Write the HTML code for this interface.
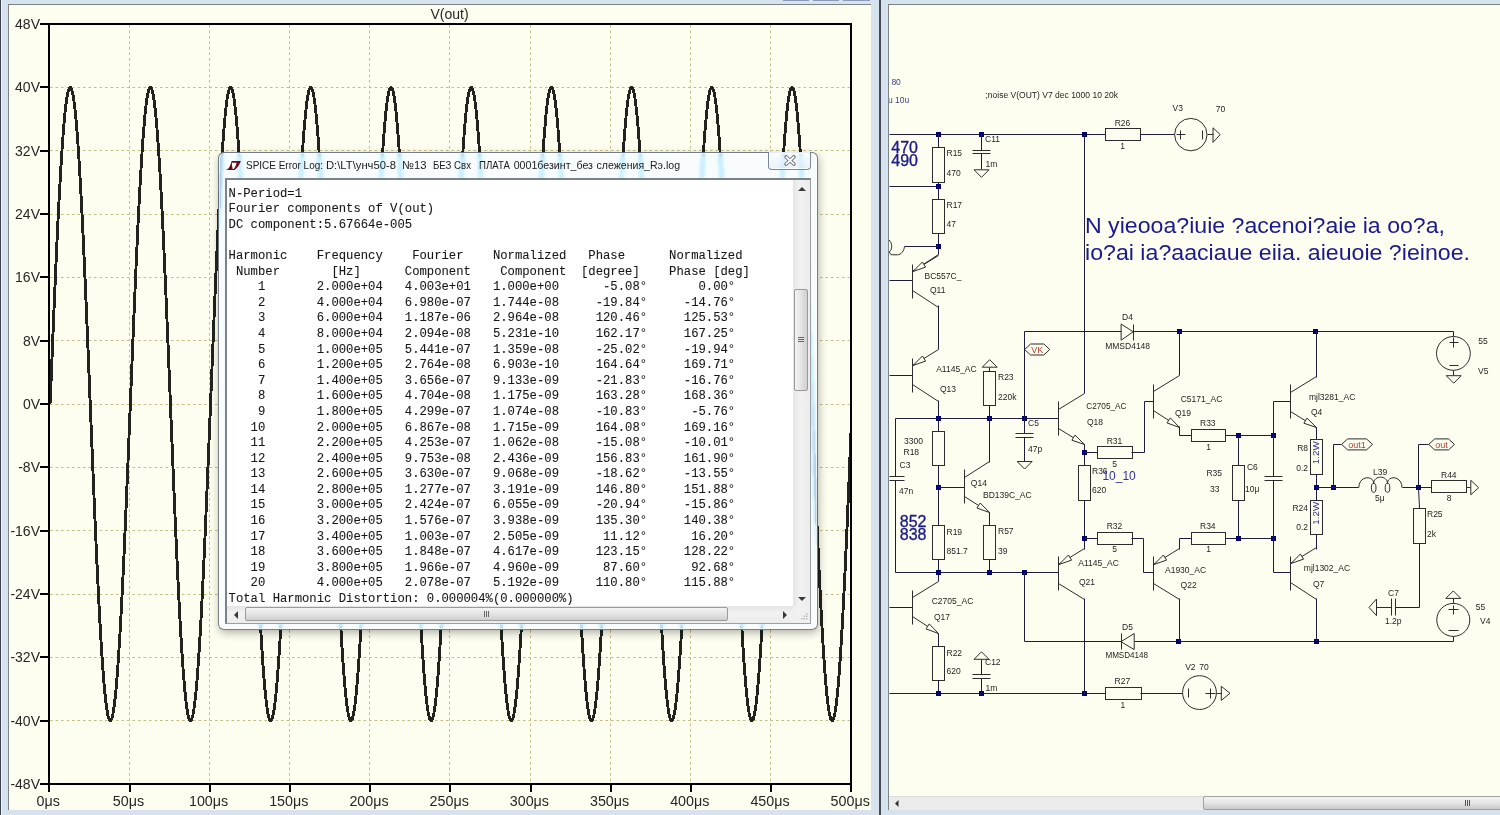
<!DOCTYPE html>
<html><head><meta charset="utf-8"><style>
html,body{margin:0;padding:0;width:1500px;height:815px;overflow:hidden;background:#d6e2ee;}
body{position:relative;font-family:"Liberation Sans",sans-serif;}
.abs{position:absolute;}
#lpane{left:8px;top:4px;width:863px;height:806px;background:#fefef0;border-left:1px solid #7c8484;border-top:1px solid #7c8484;box-sizing:border-box;}
#rpane{left:888px;top:4px;width:620px;height:806px;background:#fefef0;border-left:1px solid #7c8484;border-top:1px solid #7c8484;box-sizing:border-box;}
#dlg{left:218px;top:152px;width:600px;height:478px;border-radius:6px;border:1px solid rgba(84,94,106,0.8);box-sizing:border-box;background:rgba(248,251,254,0.5);backdrop-filter:blur(3px) sepia(1) hue-rotate(175deg) saturate(1.8);box-shadow:inset 0 0 0 1px rgba(255,255,255,0.6);}
#client{left:225px;top:178px;width:586px;height:446px;background:#fff;border:2px solid #7c8288;border-right:1px solid #9aa0a6;border-bottom:1px solid #9aa0a6;box-sizing:border-box;}
pre{margin:0;font-family:"Liberation Mono",monospace;font-size:12.24px;line-height:15.6px;color:#161616;-webkit-text-stroke:0.08px #161616;}
</style></head><body>
<div class="abs" style="left:0;top:0;width:1px;height:815px;background:#3c4450"></div>
<div class="abs" style="left:1px;top:0;width:1px;height:815px;background:#eaf2fa"></div>
<div class="abs" style="left:879px;top:0;width:2px;height:815px;background:#444c58"></div>
<div id="lpane" class="abs"></div>
<svg class="plot" width="862" height="805" viewBox="9 5 862 805" style="position:absolute;left:9px;top:5px">
<g stroke="#c6bc84" stroke-width="1" stroke-dasharray="2.6,2.9" fill="none"><line x1="129.5" y1="25" x2="129.5" y2="783" /><line x1="209.5" y1="25" x2="209.5" y2="783" /><line x1="289.5" y1="25" x2="289.5" y2="783" /><line x1="369.5" y1="25" x2="369.5" y2="783" /><line x1="449.5" y1="25" x2="449.5" y2="783" /><line x1="530.5" y1="25" x2="530.5" y2="783" /><line x1="610.5" y1="25" x2="610.5" y2="783" /><line x1="690.5" y1="25" x2="690.5" y2="783" /><line x1="770.5" y1="25" x2="770.5" y2="783" /><line x1="50" y1="87.5" x2="850" y2="87.5" /><line x1="50" y1="150.5" x2="850" y2="150.5" /><line x1="50" y1="214.5" x2="850" y2="214.5" /><line x1="50" y1="277.5" x2="850" y2="277.5" /><line x1="50" y1="340.5" x2="850" y2="340.5" /><line x1="50" y1="404.5" x2="850" y2="404.5" /><line x1="50" y1="467.5" x2="850" y2="467.5" /><line x1="50" y1="530.5" x2="850" y2="530.5" /><line x1="50" y1="594.5" x2="850" y2="594.5" /><line x1="50" y1="657.5" x2="850" y2="657.5" /><line x1="50" y1="720.5" x2="850" y2="720.5" /></g>
<polyline points="49.00,404.00 50.20,402.23 50.60,392.29 51.01,382.35 51.41,372.44 51.81,362.56 52.21,352.72 52.61,342.93 53.01,333.20 53.41,323.54 53.81,313.96 54.21,304.46 54.61,295.07 55.02,285.78 55.42,276.62 55.82,267.57 56.22,258.66 56.62,249.90 57.02,241.28 57.42,232.83 57.82,224.55 58.22,216.44 58.62,208.52 59.02,200.79 59.43,193.26 59.83,185.94 60.23,178.84 60.63,171.95 61.03,165.30 61.43,158.88 61.83,152.70 62.23,146.78 62.63,141.10 63.03,135.69 63.44,130.54 63.84,125.66 64.24,121.05 64.64,116.72 65.04,112.68 65.44,108.92 65.84,105.46 66.24,102.29 66.64,99.42 67.05,96.85 67.45,94.58 67.85,92.62 68.25,90.96 68.65,89.61 69.05,88.58 69.45,87.85 69.85,87.44 70.25,87.34 70.65,87.55 71.06,88.07 71.46,88.91 71.86,90.06 72.26,91.51 72.66,93.28 73.06,95.35 73.46,97.73 73.86,100.41 74.26,103.38 74.66,106.66 75.06,110.23 75.47,114.08 75.87,118.23 76.27,122.66 76.67,127.36 77.07,132.34 77.47,137.58 77.87,143.09 78.27,148.85 78.67,154.87 79.08,161.14 79.48,167.64 79.88,174.37 80.28,181.34 80.68,188.52 81.08,195.91 81.48,203.51 81.88,211.31 82.28,219.30 82.68,227.47 83.09,235.82 83.49,244.33 83.89,253.00 84.29,261.81 84.69,270.77 85.09,279.86 85.49,289.07 85.89,298.40 86.29,307.83 86.69,317.35 87.09,326.96 87.50,336.65 87.90,346.40 88.30,356.21 88.70,366.07 89.10,375.96 89.50,385.88 89.90,395.82 90.30,405.77 90.70,415.71 91.10,425.65 91.51,435.56 91.91,445.44 92.31,455.28 92.71,465.07 93.11,474.80 93.51,484.46 93.91,494.04 94.31,503.54 94.71,512.93 95.12,522.22 95.52,531.38 95.92,540.43 96.32,549.34 96.72,558.10 97.12,566.72 97.52,575.17 97.92,583.45 98.32,591.56 98.72,599.48 99.12,607.21 99.53,614.74 99.93,622.06 100.33,629.16 100.73,636.05 101.13,642.70 101.53,649.12 101.93,655.30 102.33,661.22 102.73,666.90 103.13,672.31 103.54,677.46 103.94,682.34 104.34,686.95 104.74,691.28 105.14,695.32 105.54,699.08 105.94,702.54 106.34,705.71 106.74,708.58 107.15,711.15 107.55,713.42 107.95,715.38 108.35,717.04 108.75,718.39 109.15,719.42 109.55,720.15 109.95,720.56 110.35,720.66 110.75,720.45 111.16,719.93 111.56,719.09 111.96,717.94 112.36,716.49 112.76,714.72 113.16,712.65 113.56,710.27 113.96,707.59 114.36,704.62 114.76,701.34 115.17,697.77 115.57,693.92 115.97,689.77 116.37,685.34 116.77,680.64 117.17,675.66 117.57,670.42 117.97,664.91 118.37,659.15 118.77,653.13 119.17,646.86 119.58,640.36 119.98,633.63 120.38,626.66 120.78,619.48 121.18,612.09 121.58,604.49 121.98,596.69 122.38,588.70 122.78,580.53 123.19,572.18 123.59,563.67 123.99,555.00 124.39,546.19 124.79,537.23 125.19,528.14 125.59,518.93 125.99,509.60 126.39,500.17 126.79,490.65 127.19,481.04 127.60,471.35 128.00,461.60 128.40,451.79 128.80,441.93 129.20,432.04 129.60,422.12 130.00,412.18 130.40,402.23 130.80,392.29 131.20,382.35 131.61,372.44 132.01,362.56 132.41,352.72 132.81,342.93 133.21,333.20 133.61,323.54 134.01,313.96 134.41,304.46 134.81,295.07 135.22,285.78 135.62,276.62 136.02,267.57 136.42,258.66 136.82,249.90 137.22,241.28 137.62,232.83 138.02,224.55 138.42,216.44 138.82,208.52 139.22,200.79 139.63,193.26 140.03,185.94 140.43,178.84 140.83,171.95 141.23,165.30 141.63,158.88 142.03,152.70 142.43,146.78 142.83,141.10 143.24,135.69 143.64,130.54 144.04,125.66 144.44,121.05 144.84,116.72 145.24,112.68 145.64,108.92 146.04,105.46 146.44,102.29 146.84,99.42 147.25,96.85 147.65,94.58 148.05,92.62 148.45,90.96 148.85,89.61 149.25,88.58 149.65,87.85 150.05,87.44 150.45,87.34 150.85,87.55 151.25,88.07 151.66,88.91 152.06,90.06 152.46,91.51 152.86,93.28 153.26,95.35 153.66,97.73 154.06,100.41 154.46,103.38 154.86,106.66 155.26,110.23 155.67,114.08 156.07,118.23 156.47,122.66 156.87,127.36 157.27,132.34 157.67,137.58 158.07,143.09 158.47,148.85 158.87,154.87 159.28,161.14 159.68,167.64 160.08,174.37 160.48,181.34 160.88,188.52 161.28,195.91 161.68,203.51 162.08,211.31 162.48,219.30 162.88,227.47 163.28,235.82 163.69,244.33 164.09,253.00 164.49,261.81 164.89,270.77 165.29,279.86 165.69,289.07 166.09,298.40 166.49,307.83 166.89,317.35 167.30,326.96 167.70,336.65 168.10,346.40 168.50,356.21 168.90,366.07 169.30,375.96 169.70,385.88 170.10,395.82 170.50,405.77 170.90,415.71 171.31,425.65 171.71,435.56 172.11,445.44 172.51,455.28 172.91,465.07 173.31,474.80 173.71,484.46 174.11,494.04 174.51,503.54 174.91,512.93 175.31,522.22 175.72,531.38 176.12,540.43 176.52,549.34 176.92,558.10 177.32,566.72 177.72,575.17 178.12,583.45 178.52,591.56 178.92,599.48 179.32,607.21 179.73,614.74 180.13,622.06 180.53,629.16 180.93,636.05 181.33,642.70 181.73,649.12 182.13,655.30 182.53,661.22 182.93,666.90 183.34,672.31 183.74,677.46 184.14,682.34 184.54,686.95 184.94,691.28 185.34,695.32 185.74,699.08 186.14,702.54 186.54,705.71 186.94,708.58 187.34,711.15 187.75,713.42 188.15,715.38 188.55,717.04 188.95,718.39 189.35,719.42 189.75,720.15 190.15,720.56 190.55,720.66 190.95,720.45 191.35,719.93 191.76,719.09 192.16,717.94 192.56,716.49 192.96,714.72 193.36,712.65 193.76,710.27 194.16,707.59 194.56,704.62 194.96,701.34 195.37,697.77 195.77,693.92 196.17,689.77 196.57,685.34 196.97,680.64 197.37,675.66 197.77,670.42 198.17,664.91 198.57,659.15 198.97,653.13 199.38,646.86 199.78,640.36 200.18,633.63 200.58,626.66 200.98,619.48 201.38,612.09 201.78,604.49 202.18,596.69 202.58,588.70 202.98,580.53 203.38,572.18 203.79,563.67 204.19,555.00 204.59,546.19 204.99,537.23 205.39,528.14 205.79,518.93 206.19,509.60 206.59,500.17 206.99,490.65 207.40,481.04 207.80,471.35 208.20,461.60 208.60,451.79 209.00,441.93 209.40,432.04 209.80,422.12 210.20,412.18 210.60,402.23 211.00,392.29 211.41,382.35 211.81,372.44 212.21,362.56 212.61,352.72 213.01,342.93 213.41,333.20 213.81,323.54 214.21,313.96 214.61,304.46 215.01,295.07 215.41,285.78 215.82,276.62 216.22,267.57 216.62,258.66 217.02,249.90 217.42,241.28 217.82,232.83 218.22,224.55 218.62,216.44 219.02,208.52 219.43,200.79 219.83,193.26 220.23,185.94 220.63,178.84 221.03,171.95 221.43,165.30 221.83,158.88 222.23,152.70 222.63,146.78 223.03,141.10 223.44,135.69 223.84,130.54 224.24,125.66 224.64,121.05 225.04,116.72 225.44,112.68 225.84,108.92 226.24,105.46 226.64,102.29 227.04,99.42 227.44,96.85 227.85,94.58 228.25,92.62 228.65,90.96 229.05,89.61 229.45,88.58 229.85,87.85 230.25,87.44 230.65,87.34 231.05,87.55 231.46,88.07 231.86,88.91 232.26,90.06 232.66,91.51 233.06,93.28 233.46,95.35 233.86,97.73 234.26,100.41 234.66,103.38 235.06,106.66 235.47,110.23 235.87,114.08 236.27,118.23 236.67,122.66 237.07,127.36 237.47,132.34 237.87,137.58 238.27,143.09 238.67,148.85 239.07,154.87 239.47,161.14 239.88,167.64 240.28,174.37 240.68,181.34 241.08,188.52 241.48,195.91 241.88,203.51 242.28,211.31 242.68,219.30 243.08,227.47 243.49,235.82 243.89,244.33 244.29,253.00 244.69,261.81 245.09,270.77 245.49,279.86 245.89,289.07 246.29,298.40 246.69,307.83 247.09,317.35 247.50,326.96 247.90,336.65 248.30,346.40 248.70,356.21 249.10,366.07 249.50,375.96 249.90,385.88 250.30,395.82 250.70,405.77 251.10,415.71 251.50,425.65 251.91,435.56 252.31,445.44 252.71,455.28 253.11,465.07 253.51,474.80 253.91,484.46 254.31,494.04 254.71,503.54 255.11,512.93 255.51,522.22 255.92,531.38 256.32,540.43 256.72,549.34 257.12,558.10 257.52,566.72 257.92,575.17 258.32,583.45 258.72,591.56 259.12,599.48 259.52,607.21 259.93,614.74 260.33,622.06 260.73,629.16 261.13,636.05 261.53,642.70 261.93,649.12 262.33,655.30 262.73,661.22 263.13,666.90 263.53,672.31 263.94,677.46 264.34,682.34 264.74,686.95 265.14,691.28 265.54,695.32 265.94,699.08 266.34,702.54 266.74,705.71 267.14,708.58 267.54,711.15 267.95,713.42 268.35,715.38 268.75,717.04 269.15,718.39 269.55,719.42 269.95,720.15 270.35,720.56 270.75,720.66 271.15,720.45 271.56,719.93 271.96,719.09 272.36,717.94 272.76,716.49 273.16,714.72 273.56,712.65 273.96,710.27 274.36,707.59 274.76,704.62 275.16,701.34 275.56,697.77 275.97,693.92 276.37,689.77 276.77,685.34 277.17,680.64 277.57,675.66 277.97,670.42 278.37,664.91 278.77,659.15 279.17,653.13 279.57,646.86 279.98,640.36 280.38,633.63 280.78,626.66 281.18,619.48 281.58,612.09 281.98,604.49 282.38,596.69 282.78,588.70 283.18,580.53 283.59,572.18 283.99,563.67 284.39,555.00 284.79,546.19 285.19,537.23 285.59,528.14 285.99,518.93 286.39,509.60 286.79,500.17 287.19,490.65 287.60,481.04 288.00,471.35 288.40,461.60 288.80,451.79 289.20,441.93 289.60,432.04 290.00,422.12 290.40,412.18 290.80,402.23 291.20,392.29 291.61,382.35 292.01,372.44 292.41,362.56 292.81,352.72 293.21,342.93 293.61,333.20 294.01,323.54 294.41,313.96 294.81,304.46 295.21,295.07 295.62,285.78 296.02,276.62 296.42,267.57 296.82,258.66 297.22,249.90 297.62,241.28 298.02,232.83 298.42,224.55 298.82,216.44 299.22,208.52 299.62,200.79 300.03,193.26 300.43,185.94 300.83,178.84 301.23,171.95 301.63,165.30 302.03,158.88 302.43,152.70 302.83,146.78 303.23,141.10 303.63,135.69 304.04,130.54 304.44,125.66 304.84,121.05 305.24,116.72 305.64,112.68 306.04,108.92 306.44,105.46 306.84,102.29 307.24,99.42 307.64,96.85 308.05,94.58 308.45,92.62 308.85,90.96 309.25,89.61 309.65,88.58 310.05,87.85 310.45,87.44 310.85,87.34 311.25,87.55 311.65,88.07 312.06,88.91 312.46,90.06 312.86,91.51 313.26,93.28 313.66,95.35 314.06,97.73 314.46,100.41 314.86,103.38 315.26,106.66 315.67,110.23 316.07,114.08 316.47,118.23 316.87,122.66 317.27,127.36 317.67,132.34 318.07,137.58 318.47,143.09 318.87,148.85 319.27,154.87 319.68,161.14 320.08,167.64 320.48,174.37 320.88,181.34 321.28,188.52 321.68,195.91 322.08,203.51 322.48,211.31 322.88,219.30 323.28,227.47 323.69,235.82 324.09,244.33 324.49,253.00 324.89,261.81 325.29,270.77 325.69,279.86 326.09,289.07 326.49,298.40 326.89,307.83 327.29,317.35 327.69,326.96 328.10,336.65 328.50,346.40 328.90,356.21 329.30,366.07 329.70,375.96 330.10,385.88 330.50,395.82 330.90,405.77 331.30,415.71 331.70,425.65 332.11,435.56 332.51,445.44 332.91,455.28 333.31,465.07 333.71,474.80 334.11,484.46 334.51,494.04 334.91,503.54 335.31,512.93 335.71,522.22 336.12,531.38 336.52,540.43 336.92,549.34 337.32,558.10 337.72,566.72 338.12,575.17 338.52,583.45 338.92,591.56 339.32,599.48 339.73,607.21 340.13,614.74 340.53,622.06 340.93,629.16 341.33,636.05 341.73,642.70 342.13,649.12 342.53,655.30 342.93,661.22 343.33,666.90 343.74,672.31 344.14,677.46 344.54,682.34 344.94,686.95 345.34,691.28 345.74,695.32 346.14,699.08 346.54,702.54 346.94,705.71 347.34,708.58 347.75,711.15 348.15,713.42 348.55,715.38 348.95,717.04 349.35,718.39 349.75,719.42 350.15,720.15 350.55,720.56 350.95,720.66 351.35,720.45 351.75,719.93 352.16,719.09 352.56,717.94 352.96,716.49 353.36,714.72 353.76,712.65 354.16,710.27 354.56,707.59 354.96,704.62 355.36,701.34 355.76,697.77 356.17,693.92 356.57,689.77 356.97,685.34 357.37,680.64 357.77,675.66 358.17,670.42 358.57,664.91 358.97,659.15 359.37,653.13 359.77,646.86 360.18,640.36 360.58,633.63 360.98,626.66 361.38,619.48 361.78,612.09 362.18,604.49 362.58,596.69 362.98,588.70 363.38,580.53 363.79,572.18 364.19,563.67 364.59,555.00 364.99,546.19 365.39,537.23 365.79,528.14 366.19,518.93 366.59,509.60 366.99,500.17 367.39,490.65 367.80,481.04 368.20,471.35 368.60,461.60 369.00,451.79 369.40,441.93 369.80,432.04 370.20,422.12 370.60,412.18 371.00,402.23 371.40,392.29 371.81,382.35 372.21,372.44 372.61,362.56 373.01,352.72 373.41,342.93 373.81,333.20 374.21,323.54 374.61,313.96 375.01,304.46 375.41,295.07 375.81,285.78 376.22,276.62 376.62,267.57 377.02,258.66 377.42,249.90 377.82,241.28 378.22,232.83 378.62,224.55 379.02,216.44 379.42,208.52 379.82,200.79 380.23,193.26 380.63,185.94 381.03,178.84 381.43,171.95 381.83,165.30 382.23,158.88 382.63,152.70 383.03,146.78 383.43,141.10 383.83,135.69 384.24,130.54 384.64,125.66 385.04,121.05 385.44,116.72 385.84,112.68 386.24,108.92 386.64,105.46 387.04,102.29 387.44,99.42 387.85,96.85 388.25,94.58 388.65,92.62 389.05,90.96 389.45,89.61 389.85,88.58 390.25,87.85 390.65,87.44 391.05,87.34 391.45,87.55 391.86,88.07 392.26,88.91 392.66,90.06 393.06,91.51 393.46,93.28 393.86,95.35 394.26,97.73 394.66,100.41 395.06,103.38 395.46,106.66 395.87,110.23 396.27,114.08 396.67,118.23 397.07,122.66 397.47,127.36 397.87,132.34 398.27,137.58 398.67,143.09 399.07,148.85 399.47,154.87 399.88,161.14 400.28,167.64 400.68,174.37 401.08,181.34 401.48,188.52 401.88,195.91 402.28,203.51 402.68,211.31 403.08,219.30 403.48,227.47 403.88,235.82 404.29,244.33 404.69,253.00 405.09,261.81 405.49,270.77 405.89,279.86 406.29,289.07 406.69,298.40 407.09,307.83 407.49,317.35 407.89,326.96 408.30,336.65 408.70,346.40 409.10,356.21 409.50,366.07 409.90,375.96 410.30,385.88 410.70,395.82 411.10,405.77 411.50,415.71 411.90,425.65 412.31,435.56 412.71,445.44 413.11,455.28 413.51,465.07 413.91,474.80 414.31,484.46 414.71,494.04 415.11,503.54 415.51,512.93 415.92,522.22 416.32,531.38 416.72,540.43 417.12,549.34 417.52,558.10 417.92,566.72 418.32,575.17 418.72,583.45 419.12,591.56 419.52,599.48 419.93,607.21 420.33,614.74 420.73,622.06 421.13,629.16 421.53,636.05 421.93,642.70 422.33,649.12 422.73,655.30 423.13,661.22 423.53,666.90 423.94,672.31 424.34,677.46 424.74,682.34 425.14,686.95 425.54,691.28 425.94,695.32 426.34,699.08 426.74,702.54 427.14,705.71 427.54,708.58 427.94,711.15 428.35,713.42 428.75,715.38 429.15,717.04 429.55,718.39 429.95,719.42 430.35,720.15 430.75,720.56 431.15,720.66 431.55,720.45 431.95,719.93 432.36,719.09 432.76,717.94 433.16,716.49 433.56,714.72 433.96,712.65 434.36,710.27 434.76,707.59 435.16,704.62 435.56,701.34 435.96,697.77 436.37,693.92 436.77,689.77 437.17,685.34 437.57,680.64 437.97,675.66 438.37,670.42 438.77,664.91 439.17,659.15 439.57,653.13 439.98,646.86 440.38,640.36 440.78,633.63 441.18,626.66 441.58,619.48 441.98,612.09 442.38,604.49 442.78,596.69 443.18,588.70 443.58,580.53 443.99,572.18 444.39,563.67 444.79,555.00 445.19,546.19 445.59,537.23 445.99,528.14 446.39,518.93 446.79,509.60 447.19,500.17 447.59,490.65 448.00,481.04 448.40,471.35 448.80,461.60 449.20,451.79 449.60,441.93 450.00,432.04 450.40,422.12 450.80,412.18 451.20,402.23 451.60,392.29 452.00,382.35 452.41,372.44 452.81,362.56 453.21,352.72 453.61,342.93 454.01,333.20 454.41,323.54 454.81,313.96 455.21,304.46 455.61,295.07 456.01,285.78 456.42,276.62 456.82,267.57 457.22,258.66 457.62,249.90 458.02,241.28 458.42,232.83 458.82,224.55 459.22,216.44 459.62,208.52 460.02,200.79 460.43,193.26 460.83,185.94 461.23,178.84 461.63,171.95 462.03,165.30 462.43,158.88 462.83,152.70 463.23,146.78 463.63,141.10 464.04,135.69 464.44,130.54 464.84,125.66 465.24,121.05 465.64,116.72 466.04,112.68 466.44,108.92 466.84,105.46 467.24,102.29 467.64,99.42 468.05,96.85 468.45,94.58 468.85,92.62 469.25,90.96 469.65,89.61 470.05,88.58 470.45,87.85 470.85,87.44 471.25,87.34 471.65,87.55 472.06,88.07 472.46,88.91 472.86,90.06 473.26,91.51 473.66,93.28 474.06,95.35 474.46,97.73 474.86,100.41 475.26,103.38 475.66,106.66 476.06,110.23 476.47,114.08 476.87,118.23 477.27,122.66 477.67,127.36 478.07,132.34 478.47,137.58 478.87,143.09 479.27,148.85 479.67,154.87 480.07,161.14 480.48,167.64 480.88,174.37 481.28,181.34 481.68,188.52 482.08,195.91 482.48,203.51 482.88,211.31 483.28,219.30 483.68,227.47 484.08,235.82 484.49,244.33 484.89,253.00 485.29,261.81 485.69,270.77 486.09,279.86 486.49,289.07 486.89,298.40 487.29,307.83 487.69,317.35 488.10,326.96 488.50,336.65 488.90,346.40 489.30,356.21 489.70,366.07 490.10,375.96 490.50,385.88 490.90,395.82 491.30,405.77 491.70,415.71 492.11,425.65 492.51,435.56 492.91,445.44 493.31,455.28 493.71,465.07 494.11,474.80 494.51,484.46 494.91,494.04 495.31,503.54 495.71,512.93 496.12,522.22 496.52,531.38 496.92,540.43 497.32,549.34 497.72,558.10 498.12,566.72 498.52,575.17 498.92,583.45 499.32,591.56 499.72,599.48 500.12,607.21 500.53,614.74 500.93,622.06 501.33,629.16 501.73,636.05 502.13,642.70 502.53,649.12 502.93,655.30 503.33,661.22 503.73,666.90 504.13,672.31 504.54,677.46 504.94,682.34 505.34,686.95 505.74,691.28 506.14,695.32 506.54,699.08 506.94,702.54 507.34,705.71 507.74,708.58 508.14,711.15 508.55,713.42 508.95,715.38 509.35,717.04 509.75,718.39 510.15,719.42 510.55,720.15 510.95,720.56 511.35,720.66 511.75,720.45 512.15,719.93 512.56,719.09 512.96,717.94 513.36,716.49 513.76,714.72 514.16,712.65 514.56,710.27 514.96,707.59 515.36,704.62 515.76,701.34 516.16,697.77 516.57,693.92 516.97,689.77 517.37,685.34 517.77,680.64 518.17,675.66 518.57,670.42 518.97,664.91 519.37,659.15 519.77,653.13 520.17,646.86 520.58,640.36 520.98,633.63 521.38,626.66 521.78,619.48 522.18,612.09 522.58,604.49 522.98,596.69 523.38,588.70 523.78,580.53 524.18,572.18 524.59,563.67 524.99,555.00 525.39,546.19 525.79,537.23 526.19,528.14 526.59,518.93 526.99,509.60 527.39,500.17 527.79,490.65 528.19,481.04 528.60,471.35 529.00,461.60 529.40,451.79 529.80,441.93 530.20,432.04 530.60,422.12 531.00,412.18 531.40,402.23 531.80,392.29 532.20,382.35 532.61,372.44 533.01,362.56 533.41,352.72 533.81,342.93 534.21,333.20 534.61,323.54 535.01,313.96 535.41,304.46 535.81,295.07 536.21,285.78 536.62,276.62 537.02,267.57 537.42,258.66 537.82,249.90 538.22,241.28 538.62,232.83 539.02,224.55 539.42,216.44 539.82,208.52 540.23,200.79 540.63,193.26 541.03,185.94 541.43,178.84 541.83,171.95 542.23,165.30 542.63,158.88 543.03,152.70 543.43,146.78 543.83,141.10 544.24,135.69 544.64,130.54 545.04,125.66 545.44,121.05 545.84,116.72 546.24,112.68 546.64,108.92 547.04,105.46 547.44,102.29 547.84,99.42 548.25,96.85 548.65,94.58 549.05,92.62 549.45,90.96 549.85,89.61 550.25,88.58 550.65,87.85 551.05,87.44 551.45,87.34 551.85,87.55 552.25,88.07 552.66,88.91 553.06,90.06 553.46,91.51 553.86,93.28 554.26,95.35 554.66,97.73 555.06,100.41 555.46,103.38 555.86,106.66 556.26,110.23 556.67,114.08 557.07,118.23 557.47,122.66 557.87,127.36 558.27,132.34 558.67,137.58 559.07,143.09 559.47,148.85 559.87,154.87 560.27,161.14 560.68,167.64 561.08,174.37 561.48,181.34 561.88,188.52 562.28,195.91 562.68,203.51 563.08,211.31 563.48,219.30 563.88,227.47 564.28,235.82 564.69,244.33 565.09,253.00 565.49,261.81 565.89,270.77 566.29,279.86 566.69,289.07 567.09,298.40 567.49,307.83 567.89,317.35 568.29,326.96 568.70,336.65 569.10,346.40 569.50,356.21 569.90,366.07 570.30,375.96 570.70,385.88 571.10,395.82 571.50,405.77 571.90,415.71 572.30,425.65 572.71,435.56 573.11,445.44 573.51,455.28 573.91,465.07 574.31,474.80 574.71,484.46 575.11,494.04 575.51,503.54 575.91,512.93 576.32,522.22 576.72,531.38 577.12,540.43 577.52,549.34 577.92,558.10 578.32,566.72 578.72,575.17 579.12,583.45 579.52,591.56 579.92,599.48 580.33,607.21 580.73,614.74 581.13,622.06 581.53,629.16 581.93,636.05 582.33,642.70 582.73,649.12 583.13,655.30 583.53,661.22 583.93,666.90 584.34,672.31 584.74,677.46 585.14,682.34 585.54,686.95 585.94,691.28 586.34,695.32 586.74,699.08 587.14,702.54 587.54,705.71 587.94,708.58 588.35,711.15 588.75,713.42 589.15,715.38 589.55,717.04 589.95,718.39 590.35,719.42 590.75,720.15 591.15,720.56 591.55,720.66 591.95,720.45 592.36,719.93 592.76,719.09 593.16,717.94 593.56,716.49 593.96,714.72 594.36,712.65 594.76,710.27 595.16,707.59 595.56,704.62 595.96,701.34 596.37,697.77 596.77,693.92 597.17,689.77 597.57,685.34 597.97,680.64 598.37,675.66 598.77,670.42 599.17,664.91 599.57,659.15 599.97,653.13 600.38,646.86 600.78,640.36 601.18,633.63 601.58,626.66 601.98,619.48 602.38,612.09 602.78,604.49 603.18,596.69 603.58,588.70 603.98,580.53 604.38,572.18 604.79,563.67 605.19,555.00 605.59,546.19 605.99,537.23 606.39,528.14 606.79,518.93 607.19,509.60 607.59,500.17 607.99,490.65 608.39,481.04 608.80,471.35 609.20,461.60 609.60,451.79 610.00,441.93 610.40,432.04 610.80,422.12 611.20,412.18 611.60,402.23 612.00,392.29 612.40,382.35 612.81,372.44 613.21,362.56 613.61,352.72 614.01,342.93 614.41,333.20 614.81,323.54 615.21,313.96 615.61,304.46 616.01,295.07 616.41,285.78 616.82,276.62 617.22,267.57 617.62,258.66 618.02,249.90 618.42,241.28 618.82,232.83 619.22,224.55 619.62,216.44 620.02,208.52 620.42,200.79 620.83,193.26 621.23,185.94 621.63,178.84 622.03,171.95 622.43,165.30 622.83,158.88 623.23,152.70 623.63,146.78 624.03,141.10 624.43,135.69 624.84,130.54 625.24,125.66 625.64,121.05 626.04,116.72 626.44,112.68 626.84,108.92 627.24,105.46 627.64,102.29 628.04,99.42 628.45,96.85 628.85,94.58 629.25,92.62 629.65,90.96 630.05,89.61 630.45,88.58 630.85,87.85 631.25,87.44 631.65,87.34 632.05,87.55 632.46,88.07 632.86,88.91 633.26,90.06 633.66,91.51 634.06,93.28 634.46,95.35 634.86,97.73 635.26,100.41 635.66,103.38 636.06,106.66 636.47,110.23 636.87,114.08 637.27,118.23 637.67,122.66 638.07,127.36 638.47,132.34 638.87,137.58 639.27,143.09 639.67,148.85 640.07,154.87 640.48,161.14 640.88,167.64 641.28,174.37 641.68,181.34 642.08,188.52 642.48,195.91 642.88,203.51 643.28,211.31 643.68,219.30 644.08,227.47 644.49,235.82 644.89,244.33 645.29,253.00 645.69,261.81 646.09,270.77 646.49,279.86 646.89,289.07 647.29,298.40 647.69,307.83 648.09,317.35 648.50,326.96 648.90,336.65 649.30,346.40 649.70,356.21 650.10,366.07 650.50,375.96 650.90,385.88 651.30,395.82 651.70,405.77 652.10,415.71 652.50,425.65 652.91,435.56 653.31,445.44 653.71,455.28 654.11,465.07 654.51,474.80 654.91,484.46 655.31,494.04 655.71,503.54 656.11,512.93 656.51,522.22 656.92,531.38 657.32,540.43 657.72,549.34 658.12,558.10 658.52,566.72 658.92,575.17 659.32,583.45 659.72,591.56 660.12,599.48 660.52,607.21 660.93,614.74 661.33,622.06 661.73,629.16 662.13,636.05 662.53,642.70 662.93,649.12 663.33,655.30 663.73,661.22 664.13,666.90 664.53,672.31 664.94,677.46 665.34,682.34 665.74,686.95 666.14,691.28 666.54,695.32 666.94,699.08 667.34,702.54 667.74,705.71 668.14,708.58 668.54,711.15 668.95,713.42 669.35,715.38 669.75,717.04 670.15,718.39 670.55,719.42 670.95,720.15 671.35,720.56 671.75,720.66 672.15,720.45 672.55,719.93 672.96,719.09 673.36,717.94 673.76,716.49 674.16,714.72 674.56,712.65 674.96,710.27 675.36,707.59 675.76,704.62 676.16,701.34 676.57,697.77 676.97,693.92 677.37,689.77 677.77,685.34 678.17,680.64 678.57,675.66 678.97,670.42 679.37,664.91 679.77,659.15 680.17,653.13 680.58,646.86 680.98,640.36 681.38,633.63 681.78,626.66 682.18,619.48 682.58,612.09 682.98,604.49 683.38,596.69 683.78,588.70 684.18,580.53 684.59,572.18 684.99,563.67 685.39,555.00 685.79,546.19 686.19,537.23 686.59,528.14 686.99,518.93 687.39,509.60 687.79,500.17 688.19,490.65 688.60,481.04 689.00,471.35 689.40,461.60 689.80,451.79 690.20,441.93 690.60,432.04 691.00,422.12 691.40,412.18 691.80,402.23 692.20,392.29 692.61,382.35 693.01,372.44 693.41,362.56 693.81,352.72 694.21,342.93 694.61,333.20 695.01,323.54 695.41,313.96 695.81,304.46 696.21,295.07 696.62,285.78 697.02,276.62 697.42,267.57 697.82,258.66 698.22,249.90 698.62,241.28 699.02,232.83 699.42,224.55 699.82,216.44 700.22,208.52 700.62,200.79 701.03,193.26 701.43,185.94 701.83,178.84 702.23,171.95 702.63,165.30 703.03,158.88 703.43,152.70 703.83,146.78 704.23,141.10 704.63,135.69 705.04,130.54 705.44,125.66 705.84,121.05 706.24,116.72 706.64,112.68 707.04,108.92 707.44,105.46 707.84,102.29 708.24,99.42 708.64,96.85 709.05,94.58 709.45,92.62 709.85,90.96 710.25,89.61 710.65,88.58 711.05,87.85 711.45,87.44 711.85,87.34 712.25,87.55 712.65,88.07 713.06,88.91 713.46,90.06 713.86,91.51 714.26,93.28 714.66,95.35 715.06,97.73 715.46,100.41 715.86,103.38 716.26,106.66 716.66,110.23 717.07,114.08 717.47,118.23 717.87,122.66 718.27,127.36 718.67,132.34 719.07,137.58 719.47,143.09 719.87,148.85 720.27,154.87 720.67,161.14 721.08,167.64 721.48,174.37 721.88,181.34 722.28,188.52 722.68,195.91 723.08,203.51 723.48,211.31 723.88,219.30 724.28,227.47 724.68,235.82 725.09,244.33 725.49,253.00 725.89,261.81 726.29,270.77 726.69,279.86 727.09,289.07 727.49,298.40 727.89,307.83 728.29,317.35 728.70,326.96 729.10,336.65 729.50,346.40 729.90,356.21 730.30,366.07 730.70,375.96 731.10,385.88 731.50,395.82 731.90,405.77 732.30,415.71 732.71,425.65 733.11,435.56 733.51,445.44 733.91,455.28 734.31,465.07 734.71,474.80 735.11,484.46 735.51,494.04 735.91,503.54 736.31,512.93 736.72,522.22 737.12,531.38 737.52,540.43 737.92,549.34 738.32,558.10 738.72,566.72 739.12,575.17 739.52,583.45 739.92,591.56 740.32,599.48 740.73,607.21 741.13,614.74 741.53,622.06 741.93,629.16 742.33,636.05 742.73,642.70 743.13,649.12 743.53,655.30 743.93,661.22 744.33,666.90 744.74,672.31 745.14,677.46 745.54,682.34 745.94,686.95 746.34,691.28 746.74,695.32 747.14,699.08 747.54,702.54 747.94,705.71 748.34,708.58 748.75,711.15 749.15,713.42 749.55,715.38 749.95,717.04 750.35,718.39 750.75,719.42 751.15,720.15 751.55,720.56 751.95,720.66 752.35,720.45 752.75,719.93 753.16,719.09 753.56,717.94 753.96,716.49 754.36,714.72 754.76,712.65 755.16,710.27 755.56,707.59 755.96,704.62 756.36,701.34 756.76,697.77 757.17,693.92 757.57,689.77 757.97,685.34 758.37,680.64 758.77,675.66 759.17,670.42 759.57,664.91 759.97,659.15 760.37,653.13 760.77,646.86 761.18,640.36 761.58,633.63 761.98,626.66 762.38,619.48 762.78,612.09 763.18,604.49 763.58,596.69 763.98,588.70 764.38,580.53 764.78,572.18 765.19,563.67 765.59,555.00 765.99,546.19 766.39,537.23 766.79,528.14 767.19,518.93 767.59,509.60 767.99,500.17 768.39,490.65 768.79,481.04 769.20,471.35 769.60,461.60 770.00,451.79 770.40,441.93 770.80,432.04 771.20,422.12 771.60,412.18 772.00,402.23 772.40,392.29 772.80,382.35 773.21,372.44 773.61,362.56 774.01,352.72 774.41,342.93 774.81,333.20 775.21,323.54 775.61,313.96 776.01,304.46 776.41,295.07 776.82,285.78 777.22,276.62 777.62,267.57 778.02,258.66 778.42,249.90 778.82,241.28 779.22,232.83 779.62,224.55 780.02,216.44 780.42,208.52 780.83,200.79 781.23,193.26 781.63,185.94 782.03,178.84 782.43,171.95 782.83,165.30 783.23,158.88 783.63,152.70 784.03,146.78 784.43,141.10 784.84,135.69 785.24,130.54 785.64,125.66 786.04,121.05 786.44,116.72 786.84,112.68 787.24,108.92 787.64,105.46 788.04,102.29 788.44,99.42 788.85,96.85 789.25,94.58 789.65,92.62 790.05,90.96 790.45,89.61 790.85,88.58 791.25,87.85 791.65,87.44 792.05,87.34 792.45,87.55 792.86,88.07 793.26,88.91 793.66,90.06 794.06,91.51 794.46,93.28 794.86,95.35 795.26,97.73 795.66,100.41 796.06,103.38 796.46,106.66 796.87,110.23 797.27,114.08 797.67,118.23 798.07,122.66 798.47,127.36 798.87,132.34 799.27,137.58 799.67,143.09 800.07,148.85 800.47,154.87 800.88,161.14 801.28,167.64 801.68,174.37 802.08,181.34 802.48,188.52 802.88,195.91 803.28,203.51 803.68,211.31 804.08,219.30 804.48,227.47 804.88,235.82 805.29,244.33 805.69,253.00 806.09,261.81 806.49,270.77 806.89,279.86 807.29,289.07 807.69,298.40 808.09,307.83 808.49,317.35 808.89,326.96 809.30,336.65 809.70,346.40 810.10,356.21 810.50,366.07 810.90,375.96 811.30,385.88 811.70,395.82 812.10,405.77 812.50,415.71 812.90,425.65 813.31,435.56 813.71,445.44 814.11,455.28 814.51,465.07 814.91,474.80 815.31,484.46 815.71,494.04 816.11,503.54 816.51,512.93 816.91,522.22 817.32,531.38 817.72,540.43 818.12,549.34 818.52,558.10 818.92,566.72 819.32,575.17 819.72,583.45 820.12,591.56 820.52,599.48 820.92,607.21 821.33,614.74 821.73,622.06 822.13,629.16 822.53,636.05 822.93,642.70 823.33,649.12 823.73,655.30 824.13,661.22 824.53,666.90 824.93,672.31 825.34,677.46 825.74,682.34 826.14,686.95 826.54,691.28 826.94,695.32 827.34,699.08 827.74,702.54 828.14,705.71 828.54,708.58 828.95,711.15 829.35,713.42 829.75,715.38 830.15,717.04 830.55,718.39 830.95,719.42 831.35,720.15 831.75,720.56 832.15,720.66 832.55,720.45 832.96,719.93 833.36,719.09 833.76,717.94 834.16,716.49 834.56,714.72 834.96,712.65 835.36,710.27 835.76,707.59 836.16,704.62 836.56,701.34 836.97,697.77 837.37,693.92 837.77,689.77 838.17,685.34 838.57,680.64 838.97,675.66 839.37,670.42 839.77,664.91 840.17,659.15 840.57,653.13 840.98,646.86 841.38,640.36 841.78,633.63 842.18,626.66 842.58,619.48 842.98,612.09 843.38,604.49 843.78,596.69 844.18,588.70 844.58,580.53 844.99,572.18 845.39,563.67 845.79,555.00 846.19,546.19 846.59,537.23 846.99,528.14 847.39,518.93 847.79,509.60 848.19,500.17 848.59,490.65 849.00,481.04 849.40,471.35 849.80,461.60 850.20,451.79 850.60,441.93 851.00,432.04" fill="none" stroke="#22221e" stroke-width="2.9" stroke-linejoin="round" shape-rendering="crispEdges"/>
<rect x="49" y="24" width="802" height="760" fill="none" stroke="#000" stroke-width="2"/>
<g stroke="#000" stroke-width="2"><line x1="40" y1="24.0" x2="50" y2="24.0"/><line x1="40" y1="87.0" x2="50" y2="87.0"/><line x1="40" y1="151.0" x2="50" y2="151.0"/><line x1="40" y1="214.0" x2="50" y2="214.0"/><line x1="40" y1="277.0" x2="50" y2="277.0"/><line x1="40" y1="341.0" x2="50" y2="341.0"/><line x1="40" y1="404.0" x2="50" y2="404.0"/><line x1="40" y1="467.0" x2="50" y2="467.0"/><line x1="40" y1="531.0" x2="50" y2="531.0"/><line x1="40" y1="594.0" x2="50" y2="594.0"/><line x1="40" y1="657.0" x2="50" y2="657.0"/><line x1="40" y1="721.0" x2="50" y2="721.0"/><line x1="40" y1="784.0" x2="50" y2="784.0"/><line x1="49.0" y1="784" x2="49.0" y2="792"/><line x1="130.0" y1="784" x2="130.0" y2="792"/><line x1="210.0" y1="784" x2="210.0" y2="792"/><line x1="290.0" y1="784" x2="290.0" y2="792"/><line x1="370.0" y1="784" x2="370.0" y2="792"/><line x1="450.0" y1="784" x2="450.0" y2="792"/><line x1="531.0" y1="784" x2="531.0" y2="792"/><line x1="611.0" y1="784" x2="611.0" y2="792"/><line x1="691.0" y1="784" x2="691.0" y2="792"/><line x1="771.0" y1="784" x2="771.0" y2="792"/><line x1="851.0" y1="784" x2="851.0" y2="792"/></g>
<g font-family="Liberation Sans" font-size="14" fill="#262626"><text x="40" y="29.0" text-anchor="end">48V</text><text x="40" y="92.3" text-anchor="end">40V</text><text x="40" y="155.7" text-anchor="end">32V</text><text x="40" y="219.0" text-anchor="end">24V</text><text x="40" y="282.3" text-anchor="end">16V</text><text x="40" y="345.7" text-anchor="end">8V</text><text x="40" y="409.0" text-anchor="end">0V</text><text x="40" y="472.3" text-anchor="end">-8V</text><text x="40" y="535.7" text-anchor="end">-16V</text><text x="40" y="599.0" text-anchor="end">-24V</text><text x="40" y="662.3" text-anchor="end">-32V</text><text x="40" y="725.7" text-anchor="end">-40V</text><text x="40" y="789.0" text-anchor="end">-48V</text><text x="48.2" y="806" text-anchor="middle" font-size="14.3">0μs</text><text x="128.4" y="806" text-anchor="middle" font-size="14.3">50μs</text><text x="208.6" y="806" text-anchor="middle" font-size="14.3">100μs</text><text x="288.8" y="806" text-anchor="middle" font-size="14.3">150μs</text><text x="369.0" y="806" text-anchor="middle" font-size="14.3">200μs</text><text x="449.2" y="806" text-anchor="middle" font-size="14.3">250μs</text><text x="529.4" y="806" text-anchor="middle" font-size="14.3">300μs</text><text x="609.6" y="806" text-anchor="middle" font-size="14.3">350μs</text><text x="689.8" y="806" text-anchor="middle" font-size="14.3">400μs</text><text x="770.0" y="806" text-anchor="middle" font-size="14.3">450μs</text><text x="850.2" y="806" text-anchor="middle" font-size="14.3">500μs</text>
<text x="449.5" y="19" text-anchor="middle">V(out)</text></g>
</svg>
<div id="rpane" class="abs"></div><svg width="611" height="791" viewBox="889 5 611 791" style="position:absolute;left:889px;top:5px" font-family="Liberation Sans" shape-rendering="auto"><polyline points="889.5,134.5 1105.5,134.5" stroke="#1e1e3c" fill="none"/><rect x="1105.5" y="128.5" width="35" height="12" fill="none" stroke="#2c2c2c"/><polyline points="1140.5,134.5 1174.5,134.5" stroke="#1e1e3c" fill="none"/><circle cx="1190.8" cy="134.6" r="16.2" fill="none" stroke="#2c2c2c"/><line x1="1176.5" y1="134.5" x2="1185.5" y2="134.5" stroke="#2c2c2c"/><line x1="1180.5" y1="130.5" x2="1180.5" y2="139.5" stroke="#2c2c2c"/><line x1="1202.5" y1="130.5" x2="1202.5" y2="139.5" stroke="#2c2c2c"/><line x1="1207.5" y1="134.5" x2="1213.5" y2="134.5" stroke="#2c2c2c"/><polygon points="1213.0,127.8 1220.2,134.6 1213.0,142.4" stroke="#2c2c2c" fill="none"/><rect x="936" y="132" width="5" height="5" fill="#000070"/><rect x="979" y="132" width="5" height="5" fill="#000070"/><rect x="1082" y="132" width="5" height="5" fill="#000070"/><polyline points="938.5,134.5 938.5,147.5" stroke="#1e1e3c" fill="none"/><rect x="932.5" y="147.5" width="12" height="35" fill="none" stroke="#2c2c2c"/><polyline points="938.5,182.5 938.5,199.5" stroke="#1e1e3c" fill="none"/><rect x="932.5" y="199.5" width="12" height="34" fill="none" stroke="#2c2c2c"/><polyline points="938.5,233.5 938.5,254.5 912.5,271.5" stroke="#1e1e3c" fill="none"/><polyline points="889.5,186.5 938.5,186.5" stroke="#1e1e3c" fill="none"/><rect x="936" y="184" width="5" height="5" fill="#000070"/><rect x="936" y="244" width="5" height="5" fill="#000070"/><polyline points="938.5,246.5 904.5,246.5" stroke="#1e1e3c" fill="none"/><path d="M904.5,246.5 C904,251 901,254.8 897.5,254.8 L892,254.8 C890.5,254.6 889.6,253.2 889.3,252 M889,240 C892.5,243 892.5,249.5 889.3,252" stroke="#2c2c2c" fill="none"/><polyline points="981.5,134.5 981.5,150.5" stroke="#1e1e3c" fill="none"/><line x1="972.5" y1="150.5" x2="990.5" y2="150.5" stroke="#2c2c2c"/><line x1="972.5" y1="153.5" x2="990.5" y2="153.5" stroke="#2c2c2c"/><polyline points="981.5,153.5 981.5,169.5" stroke="#1e1e3c" fill="none"/><polygon points="974.0,169.8 989.0,169.8 981.5,177.3" stroke="#2c2c2c" fill="none"/><polyline points="889.5,280.5 912.5,280.5" stroke="#1e1e3c" fill="none"/><line x1="912.5" y1="264.5" x2="912.5" y2="298.5" stroke="#2c2c2c"/><line x1="912.5" y1="271.5" x2="938.5" y2="255.5" stroke="#2c2c2c"/><line x1="912.5" y1="290.5" x2="938.5" y2="307.5" stroke="#2c2c2c"/><polygon points="913.0,271.5 925.6,267.1 922.4,262.0" stroke="#2c2c2c" fill="#fefef0"/><polyline points="938.5,305.5 938.5,349.5" stroke="#1e1e3c" fill="none"/><polyline points="889.5,375.5 912.5,375.5" stroke="#1e1e3c" fill="none"/><line x1="912.5" y1="358.5" x2="912.5" y2="392.5" stroke="#2c2c2c"/><line x1="912.5" y1="365.5" x2="938.5" y2="349.5" stroke="#2c2c2c"/><line x1="912.5" y1="384.5" x2="938.5" y2="401.5" stroke="#2c2c2c"/><polygon points="913.0,365.5 925.6,361.1 922.4,356.0" stroke="#2c2c2c" fill="#fefef0"/><polyline points="938.5,400.5 938.5,431.5" stroke="#1e1e3c" fill="none"/><rect x="932.5" y="431.5" width="12" height="34" fill="none" stroke="#2c2c2c"/><polyline points="895.5,476.5 895.5,418.5 1058.5,418.5" stroke="#1e1e3c" fill="none"/><rect x="936" y="416" width="5" height="5" fill="#000070"/><rect x="987" y="416" width="5" height="5" fill="#000070"/><rect x="1022" y="416" width="5" height="5" fill="#000070"/><polygon points="982.2,367.2 997.2,367.2 989.7,359.7" stroke="#2c2c2c" fill="none"/><polyline points="989.5,367.5 989.5,371.5" stroke="#1e1e3c" fill="none"/><rect x="983.5" y="371.5" width="12" height="34" fill="none" stroke="#2c2c2c"/><polyline points="989.5,405.5 989.5,462.5" stroke="#1e1e3c" fill="none"/><line x1="889.5" y1="476.5" x2="904.5" y2="476.5" stroke="#2c2c2c"/><line x1="889.5" y1="480.5" x2="904.5" y2="480.5" stroke="#2c2c2c"/><polyline points="895.5,480.5 895.5,572.5 1058.5,572.5" stroke="#1e1e3c" fill="none"/><polyline points="938.5,465.5 938.5,525.5" stroke="#1e1e3c" fill="none"/><rect x="936" y="485" width="5" height="5" fill="#000070"/><polyline points="938.5,487.5 964.5,487.5" stroke="#1e1e3c" fill="none"/><line x1="964.5" y1="469.5" x2="964.5" y2="503.5" stroke="#2c2c2c"/><line x1="964.5" y1="477.5" x2="989.5" y2="461.5" stroke="#2c2c2c"/><line x1="964.5" y1="496.5" x2="989.5" y2="512.5" stroke="#2c2c2c"/><polygon points="989.5,512.5 980.2,503.0 976.9,508.0" stroke="#2c2c2c" fill="#fefef0"/><polyline points="989.5,512.5 989.5,525.5" stroke="#1e1e3c" fill="none"/><rect x="983.5" y="525.5" width="12" height="34" fill="none" stroke="#2c2c2c"/><polyline points="989.5,559.5 989.5,572.5" stroke="#1e1e3c" fill="none"/><rect x="932.5" y="525.5" width="12" height="34" fill="none" stroke="#2c2c2c"/><polyline points="938.5,559.5 938.5,581.5" stroke="#1e1e3c" fill="none"/><rect x="936" y="570" width="5" height="5" fill="#000070"/><rect x="987" y="570" width="5" height="5" fill="#000070"/><rect x="1022" y="570" width="5" height="5" fill="#000070"/><polyline points="889.5,607.5 912.5,607.5" stroke="#1e1e3c" fill="none"/><line x1="912.5" y1="590.5" x2="912.5" y2="624.5" stroke="#2c2c2c"/><line x1="912.5" y1="597.5" x2="938.5" y2="581.5" stroke="#2c2c2c"/><line x1="912.5" y1="616.5" x2="938.5" y2="633.5" stroke="#2c2c2c"/><polygon points="938.5,633.5 929.3,623.9 926.0,628.9" stroke="#2c2c2c" fill="#fefef0"/><polyline points="938.5,633.5 938.5,646.5" stroke="#1e1e3c" fill="none"/><rect x="932.5" y="646.5" width="12" height="34" fill="none" stroke="#2c2c2c"/><polyline points="938.5,680.5 938.5,693.5" stroke="#1e1e3c" fill="none"/><polygon points="974.0,659.3 989.0,659.3 981.5,651.8" stroke="#2c2c2c" fill="none"/><polyline points="981.5,659.5 981.5,674.5" stroke="#1e1e3c" fill="none"/><line x1="972.5" y1="674.5" x2="990.5" y2="674.5" stroke="#2c2c2c"/><line x1="972.5" y1="678.5" x2="990.5" y2="678.5" stroke="#2c2c2c"/><polyline points="981.5,678.5 981.5,693.5" stroke="#1e1e3c" fill="none"/><polyline points="889.5,693.5 1105.5,693.5" stroke="#1e1e3c" fill="none"/><rect x="1105.5" y="687.5" width="36" height="12" fill="none" stroke="#2c2c2c"/><polyline points="1140.5,693.5 1182.5,693.5" stroke="#1e1e3c" fill="none"/><rect x="936" y="691" width="5" height="5" fill="#000070"/><rect x="979" y="691" width="5" height="5" fill="#000070"/><rect x="1082" y="691" width="5" height="5" fill="#000070"/><circle cx="1199.5" cy="692.6" r="16.9" fill="none" stroke="#2c2c2c"/><line x1="1188.5" y1="688.5" x2="1188.5" y2="697.5" stroke="#2c2c2c"/><line x1="1205.5" y1="693.5" x2="1215.5" y2="693.5" stroke="#2c2c2c"/><line x1="1210.5" y1="688.5" x2="1210.5" y2="698.5" stroke="#2c2c2c"/><line x1="1216.5" y1="693.5" x2="1221.5" y2="693.5" stroke="#2c2c2c"/><polygon points="1221.3,686.3 1230.0,693.3 1221.3,700.4" stroke="#2c2c2c" fill="none"/><polyline points="1024.5,418.5 1024.5,331.5 1121.5,331.5" stroke="#1e1e3c" fill="none"/><polygon points="1024.6,349.5 1030.6,344.0 1043.8,344.0 1049.8,349.5 1043.8,355.0 1030.6,355.0" stroke="#2c2c2c" fill="none"/><text x="1037.2" y="352.7" font-size="9.0" fill="#b04030" text-anchor="middle">VK</text><polygon points="1121.1,324.0 1133.2,331.8 1121.1,340.2" stroke="#2c2c2c" fill="none"/><line x1="1133.5" y1="324.5" x2="1133.5" y2="340.5" stroke="#2c2c2c"/><polyline points="1133.5,331.5 1453.5,331.5 1453.5,336.5" stroke="#1e1e3c" fill="none"/><rect x="1177" y="329" width="5" height="5" fill="#000070"/><rect x="1313" y="329" width="5" height="5" fill="#000070"/><polyline points="1024.5,418.5 1024.5,433.5" stroke="#1e1e3c" fill="none"/><line x1="1015.5" y1="433.5" x2="1033.5" y2="433.5" stroke="#2c2c2c"/><line x1="1015.5" y1="437.5" x2="1033.5" y2="437.5" stroke="#2c2c2c"/><polyline points="1024.5,437.5 1024.5,461.5" stroke="#1e1e3c" fill="none"/><polygon points="1017.1,461.5 1032.1,461.5 1024.6,469.0" stroke="#2c2c2c" fill="none"/><polyline points="1084.5,134.5 1084.5,393.5" stroke="#1e1e3c" fill="none"/><line x1="1058.5" y1="401.5" x2="1058.5" y2="435.5" stroke="#2c2c2c"/><line x1="1058.5" y1="409.5" x2="1084.5" y2="393.5" stroke="#2c2c2c"/><line x1="1058.5" y1="428.5" x2="1084.5" y2="444.5" stroke="#2c2c2c"/><polygon points="1084.5,444.5 1075.0,435.1 1071.9,440.2" stroke="#2c2c2c" fill="#fefef0"/><polyline points="1084.5,444.5 1084.5,465.5" stroke="#1e1e3c" fill="none"/><rect x="1082" y="450" width="5" height="5" fill="#000070"/><polyline points="1084.5,452.5 1097.5,452.5" stroke="#1e1e3c" fill="none"/><rect x="1097.5" y="446.5" width="35" height="12" fill="none" stroke="#2c2c2c"/><rect x="1078.5" y="465.5" width="12" height="35" fill="none" stroke="#2c2c2c"/><polyline points="1084.5,500.5 1084.5,549.5" stroke="#1e1e3c" fill="none"/><rect x="1082" y="536" width="5" height="5" fill="#000070"/><polyline points="1084.5,538.5 1097.5,538.5" stroke="#1e1e3c" fill="none"/><rect x="1097.5" y="532.5" width="35" height="12" fill="none" stroke="#2c2c2c"/><line x1="1058.5" y1="556.5" x2="1058.5" y2="590.5" stroke="#2c2c2c"/><line x1="1058.5" y1="564.5" x2="1084.5" y2="548.5" stroke="#2c2c2c"/><line x1="1058.5" y1="583.5" x2="1084.5" y2="599.5" stroke="#2c2c2c"/><polygon points="1059.0,564.5 1071.6,560.1 1068.4,555.0" stroke="#2c2c2c" fill="#fefef0"/><polyline points="1084.5,598.5 1084.5,693.5" stroke="#1e1e3c" fill="none"/><polyline points="1024.5,572.5 1024.5,641.5 1121.5,641.5" stroke="#1e1e3c" fill="none"/><line x1="1121.5" y1="633.5" x2="1121.5" y2="649.5" stroke="#2c2c2c"/><polygon points="1121.0,641.7 1134.2,633.5 1134.2,649.6" stroke="#2c2c2c" fill="none"/><polyline points="1134.5,641.5 1453.5,641.5 1453.5,636.5" stroke="#1e1e3c" fill="none"/><rect x="1176" y="639" width="5" height="5" fill="#000070"/><rect x="1314" y="639" width="5" height="5" fill="#000070"/><polyline points="1131.5,452.5 1144.5,452.5 1144.5,401.5 1153.5,401.5" stroke="#1e1e3c" fill="none"/><line x1="1153.5" y1="384.5" x2="1153.5" y2="418.5" stroke="#2c2c2c"/><line x1="1153.5" y1="391.5" x2="1179.5" y2="375.5" stroke="#2c2c2c"/><line x1="1153.5" y1="410.5" x2="1179.5" y2="427.5" stroke="#2c2c2c"/><polygon points="1179.5,427.5 1170.3,417.9 1167.0,422.9" stroke="#2c2c2c" fill="#fefef0"/><polyline points="1179.5,331.5 1179.5,375.5" stroke="#1e1e3c" fill="none"/><polyline points="1179.5,426.5 1179.5,435.5 1191.5,435.5" stroke="#1e1e3c" fill="none"/><rect x="1191.5" y="429.5" width="34" height="12" fill="none" stroke="#2c2c2c"/><polyline points="1225.5,435.5 1273.5,435.5" stroke="#1e1e3c" fill="none"/><rect x="1236" y="433" width="5" height="5" fill="#000070"/><rect x="1271" y="433" width="5" height="5" fill="#000070"/><polyline points="1238.5,435.5 1238.5,465.5" stroke="#1e1e3c" fill="none"/><rect x="1232.5" y="465.5" width="12" height="35" fill="none" stroke="#2c2c2c"/><polyline points="1238.5,500.5 1238.5,538.5" stroke="#1e1e3c" fill="none"/><polyline points="1131.5,538.5 1143.5,538.5 1143.5,572.5 1153.5,572.5" stroke="#1e1e3c" fill="none"/><line x1="1153.5" y1="556.5" x2="1153.5" y2="590.5" stroke="#2c2c2c"/><line x1="1153.5" y1="564.5" x2="1179.5" y2="548.5" stroke="#2c2c2c"/><line x1="1153.5" y1="583.5" x2="1179.5" y2="599.5" stroke="#2c2c2c"/><polygon points="1154.0,564.5 1166.6,560.1 1163.4,555.0" stroke="#2c2c2c" fill="#fefef0"/><polyline points="1179.5,549.5 1179.5,538.5 1191.5,538.5" stroke="#1e1e3c" fill="none"/><rect x="1191.5" y="532.5" width="34" height="12" fill="none" stroke="#2c2c2c"/><polyline points="1225.5,538.5 1273.5,538.5" stroke="#1e1e3c" fill="none"/><rect x="1236" y="536" width="5" height="5" fill="#000070"/><rect x="1271" y="536" width="5" height="5" fill="#000070"/><polyline points="1179.5,598.5 1179.5,641.5" stroke="#1e1e3c" fill="none"/><polyline points="1290.5,401.5 1273.5,401.5 1273.5,476.5" stroke="#1e1e3c" fill="none"/><line x1="1264.5" y1="476.5" x2="1282.5" y2="476.5" stroke="#2c2c2c"/><line x1="1264.5" y1="480.5" x2="1282.5" y2="480.5" stroke="#2c2c2c"/><polyline points="1273.5,480.5 1273.5,572.5 1290.5,572.5" stroke="#1e1e3c" fill="none"/><polyline points="1316.5,331.5 1316.5,377.5" stroke="#1e1e3c" fill="none"/><line x1="1290.5" y1="384.5" x2="1290.5" y2="418.5" stroke="#2c2c2c"/><line x1="1290.5" y1="392.5" x2="1316.5" y2="376.5" stroke="#2c2c2c"/><line x1="1290.5" y1="411.5" x2="1316.5" y2="427.5" stroke="#2c2c2c"/><polygon points="1316.5,427.5 1307.0,418.1 1303.9,423.2" stroke="#2c2c2c" fill="#fefef0"/><polyline points="1316.5,427.5 1316.5,439.5" stroke="#1e1e3c" fill="none"/><rect x="1310.5" y="439.5" width="12" height="35" fill="none" stroke="#2c2c2c"/><polyline points="1316.5,474.5 1316.5,500.5" stroke="#1e1e3c" fill="none"/><rect x="1314" y="485" width="5" height="5" fill="#000070"/><rect x="1331" y="485" width="5" height="5" fill="#000070"/><polyline points="1316.5,487.5 1358.5,487.5" stroke="#1e1e3c" fill="none"/><rect x="1310.5" y="500.5" width="12" height="34" fill="none" stroke="#2c2c2c"/><polyline points="1316.5,534.5 1316.5,549.5" stroke="#1e1e3c" fill="none"/><line x1="1290.5" y1="556.5" x2="1290.5" y2="590.5" stroke="#2c2c2c"/><line x1="1290.5" y1="563.5" x2="1316.5" y2="547.5" stroke="#2c2c2c"/><line x1="1290.5" y1="582.5" x2="1316.5" y2="599.5" stroke="#2c2c2c"/><polygon points="1291.0,563.5 1303.6,559.1 1300.4,554.0" stroke="#2c2c2c" fill="#fefef0"/><polyline points="1316.5,598.5 1316.5,641.5" stroke="#1e1e3c" fill="none"/><polyline points="1333.5,487.5 1333.5,444.5 1341.5,444.5" stroke="#1e1e3c" fill="none"/><polygon points="1341.6,444.4 1347.6,438.9 1366.5,438.9 1372.5,444.4 1366.5,449.9 1347.6,449.9" stroke="#2c2c2c" fill="none"/><text x="1357.0" y="447.6" font-size="9.0" fill="#b04030" text-anchor="middle">out1</text><path d="M1358.8,487.7 C1358.8,475.5 1373.7,475 1373.7,483.5 M1373.7,483.5 C1373.7,475 1387.5,475 1387.5,483.5 M1387.5,483.5 C1387.5,475 1402,475.5 1402,487.7" stroke="#2c2c2c" fill="none"/><ellipse cx="1373.7" cy="487.8" rx="2.3" ry="4.6" stroke="#2c2c2c" fill="none"/><ellipse cx="1387.5" cy="487.8" rx="2.3" ry="4.6" stroke="#2c2c2c" fill="none"/><polyline points="1402.5,487.5 1431.5,487.5" stroke="#1e1e3c" fill="none"/><rect x="1416" y="485" width="5" height="5" fill="#000070"/><rect x="1431.5" y="480.5" width="35" height="12" fill="none" stroke="#2c2c2c"/><line x1="1466.5" y1="487.5" x2="1470.5" y2="487.5" stroke="#2c2c2c"/><polygon points="1470.8,480.3 1478.6,487.7 1470.8,494.8" stroke="#2c2c2c" fill="none"/><polyline points="1418.5,487.5 1418.5,444.5 1428.5,444.5" stroke="#1e1e3c" fill="none"/><polygon points="1428.7,444.4 1434.7,438.9 1448.5,438.9 1454.5,444.4 1448.5,449.9 1434.7,449.9" stroke="#2c2c2c" fill="none"/><text x="1441.6" y="447.6" font-size="9.0" fill="#b04030" text-anchor="middle">out</text><polyline points="1418.5,487.5 1419.5,508.5" stroke="#1e1e3c" fill="none"/><rect x="1413.5" y="508.5" width="12" height="35" fill="none" stroke="#2c2c2c"/><polyline points="1419.5,543.5 1419.5,607.5 1395.5,607.5" stroke="#1e1e3c" fill="none"/><line x1="1391.5" y1="598.5" x2="1391.5" y2="615.5" stroke="#2c2c2c"/><line x1="1395.5" y1="598.5" x2="1395.5" y2="615.5" stroke="#2c2c2c"/><line x1="1391.5" y1="607.5" x2="1376.5" y2="607.5" stroke="#2c2c2c"/><polygon points="1376.5,599.0 1369.0,607.4 1376.5,615.6" stroke="#2c2c2c" fill="none"/><polygon points="1445.8,598.4 1460.8,598.4 1453.3,590.9" stroke="#2c2c2c" fill="none"/><line x1="1453.5" y1="598.5" x2="1453.5" y2="603.5" stroke="#2c2c2c"/><circle cx="1453.3" cy="619.9" r="16.5" fill="none" stroke="#2c2c2c"/><line x1="1448.5" y1="609.5" x2="1458.5" y2="609.5" stroke="#2c2c2c"/><line x1="1453.5" y1="605.5" x2="1453.5" y2="614.5" stroke="#2c2c2c"/><line x1="1448.5" y1="630.5" x2="1458.5" y2="630.5" stroke="#2c2c2c"/><circle cx="1453.4" cy="353.4" r="16.9" fill="none" stroke="#2c2c2c"/><line x1="1449.5" y1="342.5" x2="1458.5" y2="342.5" stroke="#2c2c2c"/><line x1="1453.5" y1="337.5" x2="1453.5" y2="347.5" stroke="#2c2c2c"/><line x1="1449.5" y1="365.5" x2="1458.5" y2="365.5" stroke="#2c2c2c"/><line x1="1453.5" y1="370.5" x2="1453.5" y2="375.5" stroke="#2c2c2c"/><polygon points="1446.2,375.7 1461.2,375.7 1453.7,383.2" stroke="#2c2c2c" fill="none"/><text x="891.4" y="85.4" font-size="8.5" fill="#404090" text-anchor="start">80</text><text x="888.0" y="102.8" font-size="8.5" fill="#404078" text-anchor="start">u 10u</text><text x="985.5" y="98.3" font-size="8.5" fill="#242424" text-anchor="start" textLength="132.5" lengthAdjust="spacingAndGlyphs">;noise V(OUT) V7 dec 1000 10 20k</text><text x="891.3" y="152.8" font-size="16.0" fill="#1c1c84" text-anchor="start" stroke="#1c1c84" stroke-width="0.35">470</text><text x="891.3" y="165.7" font-size="16.0" fill="#1c1c84" text-anchor="start" stroke="#1c1c84" stroke-width="0.35">490</text><text x="946.5" y="155.7" font-size="8.5" fill="#242424" text-anchor="start">R15</text><text x="946.5" y="176.1" font-size="8.5" fill="#242424" text-anchor="start">470</text><text x="985.0" y="142.1" font-size="8.5" fill="#242424" text-anchor="start">C11</text><text x="985.5" y="167.4" font-size="8.5" fill="#242424" text-anchor="start">1m</text><text x="1114.7" y="126.0" font-size="8.5" fill="#242424" text-anchor="start">R26</text><text x="1122.5" y="149.1" font-size="8.5" fill="#242424" text-anchor="middle">1</text><text x="1172.6" y="111.3" font-size="8.5" fill="#242424" text-anchor="start">V3</text><text x="1215.8" y="112.2" font-size="8.5" fill="#242424" text-anchor="start">70</text><text x="1085.0" y="232.7" font-size="21.5" fill="#1a1a90" text-anchor="start" textLength="360.0" lengthAdjust="spacingAndGlyphs">N yieooa?iuie ?acenoi?aie ia oo?a,</text><text x="1085.0" y="259.7" font-size="21.5" fill="#1a1a90" text-anchor="start" textLength="385.0" lengthAdjust="spacingAndGlyphs">io?ai ia?aaciaue eiia. aieuoie ?ieinoe.</text><text x="946.5" y="208.1" font-size="8.5" fill="#242424" text-anchor="start">R17</text><text x="946.5" y="227.3" font-size="8.5" fill="#242424" text-anchor="start">47</text><text x="924.5" y="279.1" font-size="8.5" fill="#242424" text-anchor="start">BC557C_</text><text x="930.0" y="293.1" font-size="8.5" fill="#242424" text-anchor="start">Q11</text><text x="936.2" y="372.3" font-size="8.5" fill="#242424" text-anchor="start">A1145_AC</text><text x="940.0" y="391.5" font-size="8.5" fill="#242424" text-anchor="start">Q13</text><text x="998.0" y="380.4" font-size="8.5" fill="#242424" text-anchor="start">R23</text><text x="998.0" y="399.8" font-size="8.5" fill="#242424" text-anchor="start">220k</text><text x="1127.5" y="320.3" font-size="8.5" fill="#242424" text-anchor="middle">D4</text><text x="1105.2" y="349.1" font-size="8.5" fill="#242424" text-anchor="start">MMSD4148</text><text x="1086.2" y="408.6" font-size="8.5" fill="#242424" text-anchor="start" textLength="40.4" lengthAdjust="spacingAndGlyphs">C2705_AC</text><text x="1086.9" y="424.5" font-size="8.5" fill="#242424" text-anchor="start">Q18</text><text x="1028.0" y="425.6" font-size="8.5" fill="#242424" text-anchor="start">C5</text><text x="1028.0" y="451.8" font-size="8.5" fill="#242424" text-anchor="start">47p</text><text x="904.0" y="443.5" font-size="8.5" fill="#242424" text-anchor="start">3300</text><text x="903.5" y="454.7" font-size="8.5" fill="#242424" text-anchor="start">R18</text><text x="899.6" y="467.6" font-size="8.5" fill="#242424" text-anchor="start">C3</text><text x="899.0" y="493.8" font-size="8.5" fill="#242424" text-anchor="start">47n</text><text x="970.8" y="485.7" font-size="8.5" fill="#242424" text-anchor="start">Q14</text><text x="983.0" y="498.1" font-size="8.5" fill="#242424" text-anchor="start">BD139C_AC</text><text x="946.5" y="534.6" font-size="8.5" fill="#242424" text-anchor="start">R19</text><text x="946.5" y="553.5" font-size="8.5" fill="#242424" text-anchor="start">851.7</text><text x="998.0" y="534.2" font-size="8.5" fill="#242424" text-anchor="start">R57</text><text x="998.0" y="554.1" font-size="8.5" fill="#242424" text-anchor="start">39</text><text x="899.8" y="527.0" font-size="16.0" fill="#1c1c84" text-anchor="start" stroke="#1c1c84" stroke-width="0.35">852</text><text x="899.8" y="539.9" font-size="16.0" fill="#1c1c84" text-anchor="start" stroke="#1c1c84" stroke-width="0.35">838</text><text x="1106.7" y="444.0" font-size="8.5" fill="#242424" text-anchor="start">R31</text><text x="1114.5" y="466.7" font-size="8.5" fill="#242424" text-anchor="middle">5</text><text x="1092.0" y="474.1" font-size="8.5" fill="#242424" text-anchor="start">R36</text><text x="1092.0" y="493.0" font-size="8.5" fill="#242424" text-anchor="start">620</text><text x="1102.4" y="479.6" font-size="12.0" fill="#3030a0" text-anchor="start">10_10</text><text x="1106.7" y="529.4" font-size="8.5" fill="#242424" text-anchor="start">R32</text><text x="1114.5" y="552.3" font-size="8.5" fill="#242424" text-anchor="middle">5</text><text x="1180.7" y="402.4" font-size="8.5" fill="#242424" text-anchor="start">C5171_AC</text><text x="1175.0" y="415.6" font-size="8.5" fill="#242424" text-anchor="start">Q19</text><text x="1200.0" y="426.0" font-size="8.5" fill="#242424" text-anchor="start">R33</text><text x="1208.7" y="449.8" font-size="8.5" fill="#242424" text-anchor="middle">1</text><text x="1206.4" y="476.3" font-size="8.5" fill="#242424" text-anchor="start">R35</text><text x="1210.0" y="491.6" font-size="8.5" fill="#242424" text-anchor="start">33</text><text x="1246.9" y="470.1" font-size="8.5" fill="#242424" text-anchor="start">C6</text><text x="1245.0" y="491.6" font-size="8.5" fill="#242424" text-anchor="start">10μ</text><text x="1200.0" y="529.0" font-size="8.5" fill="#242424" text-anchor="start">R34</text><text x="1208.7" y="552.3" font-size="8.5" fill="#242424" text-anchor="middle">1</text><text x="1165.0" y="572.6" font-size="8.5" fill="#242424" text-anchor="start">A1930_AC</text><text x="1180.6" y="587.7" font-size="8.5" fill="#242424" text-anchor="start">Q22</text><text x="1078.3" y="566.1" font-size="8.5" fill="#242424" text-anchor="start">A1145_AC</text><text x="1079.0" y="584.6" font-size="8.5" fill="#242424" text-anchor="start">Q21</text><text x="931.7" y="604.3" font-size="8.5" fill="#242424" text-anchor="start">C2705_AC</text><text x="934.0" y="619.8" font-size="8.5" fill="#242424" text-anchor="start">Q17</text><text x="946.5" y="655.6" font-size="8.5" fill="#242424" text-anchor="start">R22</text><text x="946.5" y="674.3" font-size="8.5" fill="#242424" text-anchor="start">620</text><text x="985.0" y="665.2" font-size="8.5" fill="#242424" text-anchor="start">C12</text><text x="985.5" y="691.0" font-size="8.5" fill="#242424" text-anchor="start">1m</text><text x="1127.5" y="630.2" font-size="8.5" fill="#242424" text-anchor="middle">D5</text><text x="1105.4" y="658.1" font-size="8.5" fill="#242424" text-anchor="start" textLength="42.7" lengthAdjust="spacingAndGlyphs">MMSD4148</text><text x="1114.6" y="684.4" font-size="8.5" fill="#242424" text-anchor="start">R27</text><text x="1122.9" y="707.5" font-size="8.5" fill="#242424" text-anchor="middle">1</text><text x="1185.2" y="670.3" font-size="8.5" fill="#242424" text-anchor="start">V2</text><text x="1199.3" y="670.1" font-size="8.5" fill="#242424" text-anchor="start">70</text><text x="1309.0" y="399.9" font-size="8.5" fill="#242424" text-anchor="start">mjl3281_AC</text><text x="1311.0" y="414.5" font-size="8.5" fill="#242424" text-anchor="start">Q4</text><text x="1308.0" y="451.3" font-size="8.5" fill="#242424" text-anchor="end">R8</text><text x="1308.0" y="470.7" font-size="8.5" fill="#242424" text-anchor="end">0.2</text><text x="1308.0" y="511.4" font-size="8.5" fill="#242424" text-anchor="end">R24</text><text x="1308.0" y="530.3" font-size="8.5" fill="#242424" text-anchor="end">0.2</text><text x="0" y="0" font-size="9.8" fill="#303088" textLength="23" lengthAdjust="spacingAndGlyphs" transform="translate(1318.6 464.2) rotate(-90)">1.2W</text><text x="0" y="0" font-size="9.8" fill="#303088" textLength="23" lengthAdjust="spacingAndGlyphs" transform="translate(1318.6 524.8) rotate(-90)">1.2W</text><text x="1373.0" y="474.8" font-size="8.5" fill="#242424" text-anchor="start">L39</text><text x="1375.0" y="501.1" font-size="8.5" fill="#242424" text-anchor="start">5μ</text><text x="1441.0" y="477.9" font-size="8.5" fill="#242424" text-anchor="start">R44</text><text x="1449.0" y="501.1" font-size="8.5" fill="#242424" text-anchor="middle">8</text><text x="1427.0" y="517.4" font-size="8.5" fill="#242424" text-anchor="start">R25</text><text x="1427.0" y="537.2" font-size="8.5" fill="#242424" text-anchor="start">2k</text><text x="1303.8" y="570.6" font-size="8.5" fill="#242424" text-anchor="start">mjl1302_AC</text><text x="1313.0" y="586.9" font-size="8.5" fill="#242424" text-anchor="start">Q7</text><text x="1388.0" y="595.5" font-size="8.5" fill="#242424" text-anchor="start">C7</text><text x="1385.0" y="623.9" font-size="8.5" fill="#242424" text-anchor="start">1.2p</text><text x="1475.7" y="610.1" font-size="8.5" fill="#242424" text-anchor="start">55</text><text x="1480.0" y="623.9" font-size="8.5" fill="#242424" text-anchor="start">V4</text><text x="1478.3" y="343.5" font-size="8.5" fill="#242424" text-anchor="start">55</text><text x="1478.0" y="373.9" font-size="8.5" fill="#242424" text-anchor="start">V5</text></svg>
<div class="abs" style="left:783px;top:0;width:26px;height:1px;background:#8a9ab8"></div>
<div class="abs" style="left:813px;top:0;width:26px;height:1px;background:#8a9ab8"></div>
<div class="abs" style="left:843px;top:0;width:27px;height:1px;background:#8a9ab8"></div>
<div id="dlgshadow" class="abs" style="left:218px;top:152px;width:600px;height:478px;border-radius:6px;box-shadow:1px 3px 8px rgba(0,0,0,0.3)"></div>
<div id="dlg" class="abs"></div>
<svg class="abs" style="left:222px;top:156px" width="24" height="18" viewBox="0 0 24 18"><path fill-rule="evenodd" d="M3.8,13.9 C7,13.3 8.6,9 9.6,4.9 L18.9,4.9 C17.4,8.4 15.4,12.2 12.6,13.9 Z M9.9,6.8 L14.7,6.8 C13.9,9.5 12.9,11.8 11.8,12.9 L10.7,12.9 C10.1,11 9.8,9 9.9,6.8 Z" fill="#6e0a18"/></svg>
<svg class="abs" style="left:240px;top:155px" width="460" height="20"><text y="13.6" font-family="Liberation Sans" font-size="11.6" fill="#1a1a1a"><tspan x="6.0" textLength="77.0" lengthAdjust="spacingAndGlyphs">SPICE Error Log:</tspan><tspan x="86.0" textLength="70.0" lengthAdjust="spacingAndGlyphs">D:\LT\унч50-8</tspan><tspan x="162.0" textLength="24.5" lengthAdjust="spacingAndGlyphs">№13</tspan><tspan x="193.0" textLength="38.0" lengthAdjust="spacingAndGlyphs">БЕЗ Свх</tspan><tspan x="239.0" textLength="31.0" lengthAdjust="spacingAndGlyphs">ПЛАТА</tspan><tspan x="273.7" textLength="79.3" lengthAdjust="spacingAndGlyphs">0001безинт_без</tspan><tspan x="356.6" textLength="83.4" lengthAdjust="spacingAndGlyphs">слежения_Rэ.log</tspan></text></svg>
<div class="abs" style="left:768px;top:152px;width:43px;height:18px;border:1px solid #7a8696;border-top:none;border-radius:0 0 4px 4px;box-sizing:border-box;background:linear-gradient(rgba(250,252,255,0.5),rgba(220,232,244,0.5));box-shadow:inset 0 0 0 1px rgba(255,255,255,0.7)"></div>
<svg class="abs" style="left:784px;top:155px" width="12" height="11" viewBox="0 0 12 11"><path d="M2.2,2 L9.8,9 M9.8,2 L2.2,9" stroke="#5c6470" stroke-width="3.6" stroke-linecap="round"/><path d="M2.2,2 L9.8,9 M9.8,2 L2.2,9" stroke="#fdfdfd" stroke-width="1.8" stroke-linecap="round"/></svg>
<div id="client" class="abs"></div>
<div class="abs" style="left:793px;top:180px;width:17px;height:426px;background:linear-gradient(90deg,#e4e4e4,#f2f2f2 40%,#ececec)"></div>
<div class="abs" style="left:794px;top:289px;width:14px;height:102px;border:1px solid #9a9a9a;border-radius:2px;box-sizing:border-box;background:linear-gradient(90deg,#f4f4f4,#e0e0e0 60%,#cfcfcf)"></div>
<div class="abs" style="left:798px;top:337px;width:6px;height:1px;background:#666;box-shadow:0 2px 0 #666,0 4px 0 #666"></div>
<svg class="abs" style="left:797.5px;top:187px" width="8" height="5"><path d="M0,4 L4,0 L8,4 Z" fill="#3a3a3a"/></svg>
<svg class="abs" style="left:797.5px;top:597px" width="8" height="5"><path d="M0,0 L4,4 L8,0 Z" fill="#3a3a3a"/></svg>
<div class="abs" style="left:227px;top:606px;width:566px;height:17px;background:linear-gradient(#e4e4e4,#f2f2f2 40%,#ececec)"></div>
<div class="abs" style="left:245px;top:607px;width:483px;height:14px;border:1px solid #9a9a9a;border-radius:2px;box-sizing:border-box;background:linear-gradient(#f4f4f4,#e0e0e0 60%,#cfcfcf)"></div>
<div class="abs" style="left:484px;top:611px;width:1px;height:6px;background:#666;box-shadow:2px 0 0 #666,4px 0 0 #666"></div>
<svg class="abs" style="left:233.5px;top:610.5px" width="5" height="8"><path d="M4,0 L0,4 L4,8 Z" fill="#3a3a3a"/></svg>
<svg class="abs" style="left:782.5px;top:610.5px" width="5" height="8"><path d="M0,0 L4,4 L0,8 Z" fill="#3a3a3a"/></svg>
<div class="abs" style="left:793px;top:606px;width:17px;height:17px;background:#f0f0f0"></div><svg class="abs" style="left:799px;top:612px" width="10" height="10"><g fill="#b8b8b8"><rect x="7" y="1" width="1.5" height="1.5"/><rect x="4.5" y="3.5" width="1.5" height="1.5"/><rect x="7" y="3.5" width="1.5" height="1.5"/><rect x="2" y="6" width="1.5" height="1.5"/><rect x="4.5" y="6" width="1.5" height="1.5"/><rect x="7" y="6" width="1.5" height="1.5"/></g></svg>
<div class="abs" style="left:889px;top:796px;width:611px;height:14px;background:#ebebeb;border-top:1px solid #dadada;box-sizing:border-box"></div>
<svg class="abs" style="left:894px;top:799px" width="5" height="9"><path d="M4.5,1 L1,4.5 L4.5,8 Z" fill="#303030"/></svg>
<div class="abs" style="left:1203px;top:796px;width:310px;height:14px;border:1px solid #a0a0a0;border-radius:2px;box-sizing:border-box;background:linear-gradient(#f4f4f4,#e4e4e4 50%,#cacaca)"></div>
<div class="abs" style="left:1465px;top:800px;width:1px;height:6px;background:#555;box-shadow:2px 0 0 #555,4px 0 0 #555"></div>
<pre class="abs" style="left:228.6px;top:186.6px">N-Period=1
Fourier components of V(out)
DC component:5.67664e-005

Harmonic    Frequency    Fourier    Normalized   Phase      Normalized
 Number       [Hz]      Component    Component  [degree]    Phase [deg]
    1       2.000e+04   4.003e+01   1.000e+00      -5.08°       0.00°
    2       4.000e+04   6.980e-07   1.744e-08     -19.84°     -14.76°
    3       6.000e+04   1.187e-06   2.964e-08     120.46°     125.53°
    4       8.000e+04   2.094e-08   5.231e-10     162.17°     167.25°
    5       1.000e+05   5.441e-07   1.359e-08     -25.02°     -19.94°
    6       1.200e+05   2.764e-08   6.903e-10     164.64°     169.71°
    7       1.400e+05   3.656e-07   9.133e-09     -21.83°     -16.76°
    8       1.600e+05   4.704e-08   1.175e-09     163.28°     168.36°
    9       1.800e+05   4.299e-07   1.074e-08     -10.83°      -5.76°
   10       2.000e+05   6.867e-08   1.715e-09     164.08°     169.16°
   11       2.200e+05   4.253e-07   1.062e-08     -15.08°     -10.01°
   12       2.400e+05   9.753e-08   2.436e-09     156.83°     161.90°
   13       2.600e+05   3.630e-07   9.068e-09     -18.62°     -13.55°
   14       2.800e+05   1.277e-07   3.191e-09     146.80°     151.88°
   15       3.000e+05   2.424e-07   6.055e-09     -20.94°     -15.86°
   16       3.200e+05   1.576e-07   3.938e-09     135.30°     140.38°
   17       3.400e+05   1.003e-07   2.505e-09      11.12°      16.20°
   18       3.600e+05   1.848e-07   4.617e-09     123.15°     128.22°
   19       3.800e+05   1.966e-07   4.960e-09      87.60°      92.68°
   20       4.000e+05   2.078e-07   5.192e-09     110.80°     115.88°
Total Harmonic Distortion: 0.000004%(0.000000%)</pre>
</body></html>
